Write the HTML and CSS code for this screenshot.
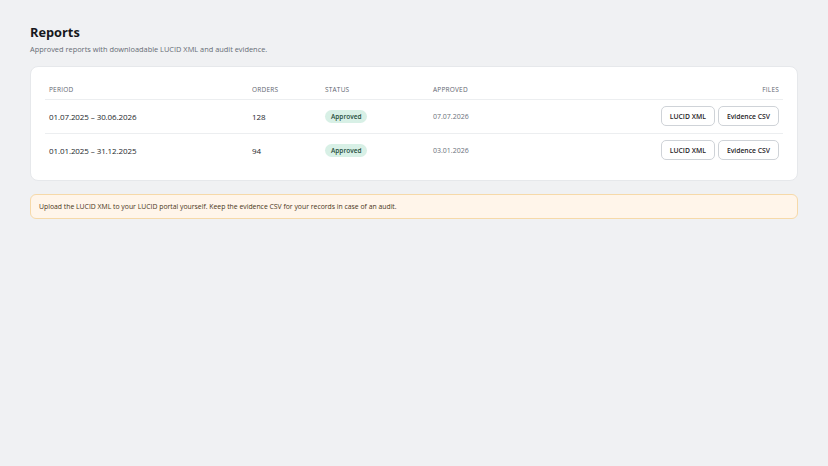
FILE: index.html
```html
<!DOCTYPE html>
<html lang="en">
<head>
<meta charset="utf-8">
<title>Reports</title>
<link rel="stylesheet" href="styles.css">
</head>
<body>
<main class="page">
  <header class="page-head">
    <h1 class="title">Reports</h1>
    <p class="subtitle">Approved reports with downloadable LUCID XML and audit evidence.</p>
  </header>
  <section class="card">
    <table class="table">
      <thead>
        <tr>
          <th class="col-period">Period</th>
          <th class="col-orders">Orders</th>
          <th class="col-status">Status</th>
          <th class="col-approved">Approved</th>
          <th class="col-files">Files</th>
        </tr>
      </thead>
      <tbody>
        <tr>
          <td class="period">01.07.2025 – 30.06.2026</td>
          <td class="orders">128</td>
          <td><span class="badge">Approved</span></td>
          <td class="approved">07.07.2026</td>
          <td class="files"><div class="btns"><button class="btn">LUCID XML</button><button class="btn">Evidence CSV</button></div></td>
        </tr>
        <tr>
          <td class="period">01.01.2025 – 31.12.2025</td>
          <td class="orders">94</td>
          <td><span class="badge">Approved</span></td>
          <td class="approved">03.01.2026</td>
          <td class="files"><div class="btns"><button class="btn">LUCID XML</button><button class="btn">Evidence CSV</button></div></td>
        </tr>
      </tbody>
    </table>
  </section>
  <div class="notice">Upload the LUCID XML to your LUCID portal yourself. Keep the evidence CSV for your records in case of an audit.</div>
</main>
</body>
</html>
```

FILE: styles.css
```css
* { box-sizing: border-box; }
html, body { margin: 0; padding: 0; }
body {
  background: #f0f1f3;
  font-family: "Open Sans", "Noto Sans", sans-serif;
  color: #1f2328;
}
.page {
  padding: 23px 30px;
  display: flex;
  flex-direction: column;
}
.page-head { margin-bottom: 11px; }
.title {
  margin: 0;
  font-size: 12.8px;
  font-weight: 700;
  line-height: 19px;
  color: #16181c;
}
.subtitle {
  margin: 2px 0 0;
  font-size: 7.4px;
  line-height: 11px;
  color: #666c75;
}
.card {
  background: #fff;
  border-radius: 8px;
  border: 1px solid #e6e8eb;
  padding: 13px 14px 13px;
}
.table {
  width: 100%;
  border-collapse: collapse;
}
.table th {
  font-size: 6.5px;
  font-weight: 400;
  text-transform: uppercase;
  letter-spacing: 0.2px;
  color: #5f6670;
  text-align: left;
  padding: 0 4px;
  height: 19px;
  border-bottom: 1px solid #eceef0;
}
.table td {
  font-size: 8px;
  letter-spacing: -0.1px;
  padding: 0 4px;
  height: 34px;
  border-bottom: 1px solid #eceef0;
  color: #23272d;
}
.table tbody tr:last-child td { border-bottom: none; }
.col-period { width: 203px; }
.col-orders { width: 73px; }
.col-status { width: 108px; }
.table th.col-files { text-align: right; }
.table td.approved { color: #6b717a; font-size: 7px; letter-spacing: 0; }
.badge {
  display: inline-block;
  background: #d8f0e6;
  color: #1f4d3b;
  font-size: 6.5px;
  font-weight: 600;
  letter-spacing: 0;
  padding: 2px 6px;
  border-radius: 7px;
  line-height: 9px;
}
.btns {
  display: flex;
  justify-content: flex-end;
  gap: 3px;
}
.btn {
  font-family: inherit;
  font-size: 6.8px;
  font-weight: 600;
  letter-spacing: 0;
  color: #1f2328;
  background: #fff;
  border: 1px solid #cfd3d8;
  border-radius: 5px;
  height: 20px;
  padding: 0 8px;
  cursor: pointer;
}
.notice {
  margin-top: 13px;
  background: #fff5ea;
  border: 1px solid #f6d9a9;
  border-radius: 6px;
  padding: 0 8px;
  height: 25px;
  display: flex;
  align-items: center;
  font-size: 6.85px;
  color: #4a3520;
}
```
